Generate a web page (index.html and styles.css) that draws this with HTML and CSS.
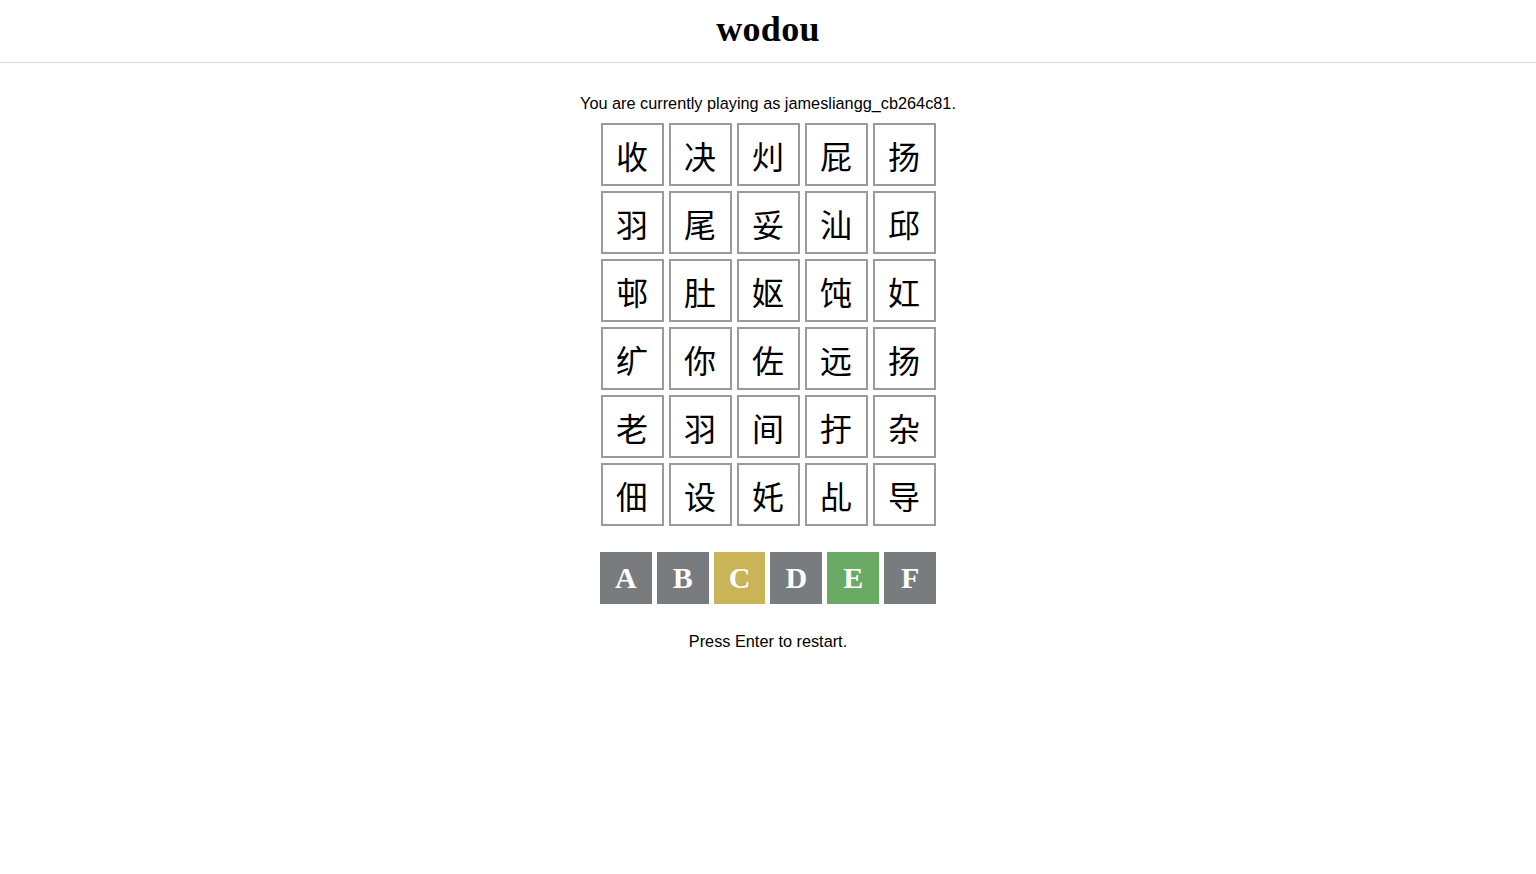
FILE: index.html
```html
<!DOCTYPE html>
<html lang="zh">
<head>
<meta charset="utf-8">
<title>wodou</title>
<link rel="stylesheet" href="styles.css">
</head>
<body>
<header class="header"><h1 class="title">wodou</h1></header>
<main class="main">
  <p class="status">You are currently playing as jamesliangg_cb264c81.</p>
  <div class="board">
    <div class="tile">收</div><div class="tile">决</div><div class="tile">灲</div><div class="tile">屁</div><div class="tile">扬</div>
    <div class="tile">羽</div><div class="tile">尾</div><div class="tile">妥</div><div class="tile">汕</div><div class="tile">邱</div>
    <div class="tile">邨</div><div class="tile">肚</div><div class="tile">妪</div><div class="tile">饨</div><div class="tile">妅</div>
    <div class="tile">纩</div><div class="tile">你</div><div class="tile">佐</div><div class="tile">远</div><div class="tile">扬</div>
    <div class="tile">老</div><div class="tile">羽</div><div class="tile">间</div><div class="tile">扜</div><div class="tile">杂</div>
    <div class="tile">佃</div><div class="tile">设</div><div class="tile">奼</div><div class="tile">乩</div><div class="tile">导</div>
  </div>
  <div class="keys">
    <div class="key absent">A</div>
    <div class="key absent">B</div>
    <div class="key present">C</div>
    <div class="key absent">D</div>
    <div class="key correct">E</div>
    <div class="key absent">F</div>
  </div>
  <p class="restart">Press Enter to restart.</p>
</main>
</body>
</html>
```
FILE: styles.css
```css
html, body {
  margin: 0;
  padding: 0;
  background: #ffffff;
  color: #000;
}
body {
  font-family: "Liberation Sans", Arial, sans-serif;
}
.header {
  box-sizing: border-box;
  height: 63px;
  padding-bottom: 4px;
  border-bottom: 1px solid #d6d6d6;
  display: flex;
  align-items: center;
  justify-content: center;
}
.title {
  margin: 0;
  font-family: "Liberation Serif", "Times New Roman", serif;
  font-weight: bold;
  font-size: 36px;
  line-height: 1;
  letter-spacing: 0.3px;
}
.main {
  display: flex;
  flex-direction: column;
  align-items: center;
}
.status {
  margin: 30px 0 0;
  font-size: 16.3px;
  line-height: 20px;
}
.board {
  margin-top: 10px;
  display: grid;
  grid-template-columns: repeat(5, 63px);
  grid-auto-rows: 63px;
  gap: 5px;
}
.tile {
  box-sizing: border-box;
  border: 2px solid #9a9a9a;
  display: flex;
  align-items: center;
  justify-content: center;
  font-family: "Noto Sans CJK SC", sans-serif;
  font-size: 32px;
  font-weight: 400;
  line-height: 1;
}
.keys {
  margin-top: 26px;
  display: flex;
  gap: 5px;
  width: 336px;
}
.key {
  flex: 1;
  height: 52px;
  display: flex;
  align-items: center;
  justify-content: center;
  color: #fff;
  font-family: "Liberation Serif", "Times New Roman", serif;
  font-weight: bold;
  font-size: 30px;
}
.absent { background: #787c7e; }
.present { background: #c9b458; }
.correct { background: #6aaa64; }
.restart {
  margin: 27px 0 0;
  font-size: 16.3px;
  line-height: 20px;
}
```
